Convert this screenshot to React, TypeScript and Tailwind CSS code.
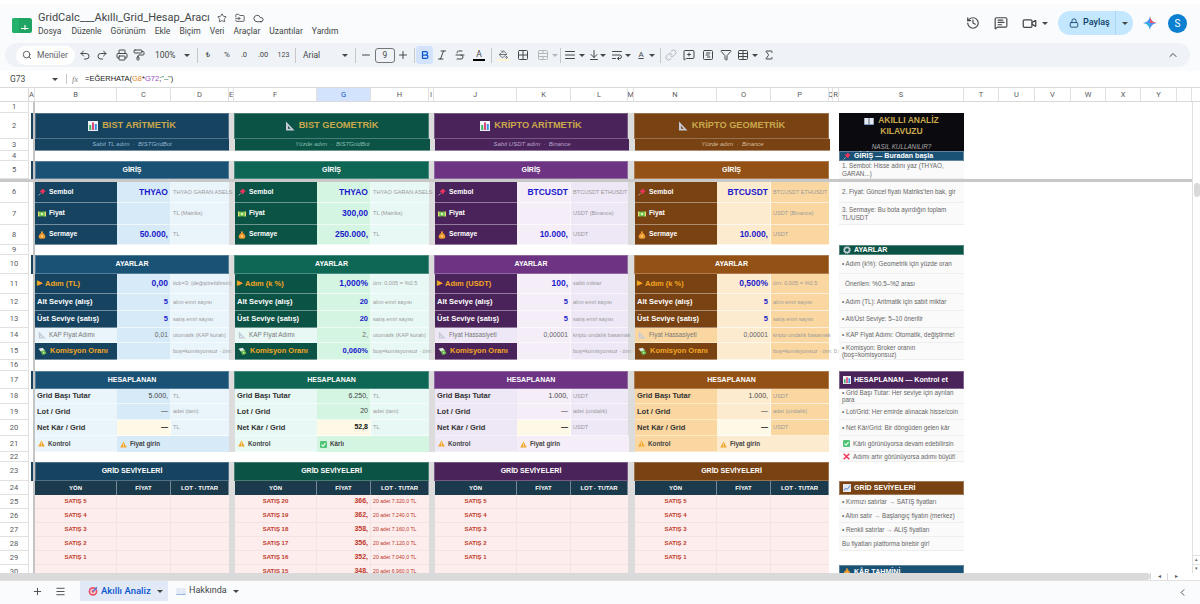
import { ReactNode } from "react";
import {
  Bold,
  ChevronLeft,
  ChevronUp,
  Cloud,
  Filter,
  FolderInput,
  Grid2x2,
  History,
  Italic,
  Link,
  Lock,
  Menu,
  MessageSquarePlus,
  MessageSquareText,
  Minus,
  PaintRoller,
  Plus,
  Printer,
  Redo2,
  Search,
  Sigma,
  SquareChartGantt,
  Star,
  Strikethrough,
  Table,
  TableCellsMerge,
  Undo2,
  Video,
  AlignJustify,
  ArrowDownToLine,
  WrapText,
  PaintBucket,
} from "lucide-react";

const SHEET_FONT = "font-['Liberation_Sans',Arial,sans-serif]";

const columns = [
  { l: "A", w: "w-[6px]" },
  { l: "B", w: "w-[82px]" },
  { l: "C", w: "w-[54px]" },
  { l: "D", w: "w-[58px]" },
  { l: "E", w: "w-[5px]" },
  { l: "F", w: "w-[83px]" },
  { l: "G", w: "w-[54px]" },
  { l: "H", w: "w-[58px]" },
  { l: "I", w: "w-[5px]" },
  { l: "J", w: "w-[83px]" },
  { l: "K", w: "w-[54px]" },
  { l: "L", w: "w-[57px]" },
  { l: "M", w: "w-[6px]" },
  { l: "N", w: "w-[83px]" },
  { l: "O", w: "w-[54px]" },
  { l: "P", w: "w-[58px]" },
  { l: "Q", w: "w-[4px]" },
  { l: "R", w: "w-[6px]" },
  { l: "S", w: "w-[125px]" },
  { l: "T", w: "w-[35px]" },
  { l: "U", w: "w-[36px]" },
  { l: "V", w: "w-[36px]" },
  { l: "W", w: "w-[35px]" },
  { l: "X", w: "w-[35px]" },
  { l: "Y", w: "w-[36px]" },
  { l: "", w: "w-[15px]" },
];

type Panel = {
  id: string;
  outer: string;
  inset: string;
  gutBg: string;
  headW: string;
  noteW: string;
  titleBg: string;
  headBg: string;
  labelBg: string;
  inputBg: string;
  noteBg: string;
  softBg: string;
  title: string;
  sub: string;
  subColor: string;
  sym: string;
  symNote: string;
  price: string;
  priceNote: string;
  capital: string;
  capNote: string;
  stepLabel: string;
  step: string;
  stepNote: string;
  lower: string;
  upper: string;
  tickLabel: string;
  tick: string;
  tickNote: string;
  comm: string;
  commNote: string;
  perGrid: string;
  unit: string;
  lot: string;
  lotNote: string;
  net: string;
  good: boolean;
  levels: string[][];
  geo: boolean;
};

const emptyLevels = [5, 4, 3, 2, 1, 0].map((n) => [n ? `SATIŞ ${n}` : "", "", ""]);

const panels: Panel[] = [
  {
    id: "bist-a",
    outer: "w-[199px]",
    inset: "",
    gutBg: "bg-[#dcdcdc]",
    headW: "w-[194px]",
    noteW: "w-[58px]",
    titleBg: "bg-[#154360]",
    headBg: "bg-[#1a5276]",
    labelBg: "bg-[#154360]",
    inputBg: "bg-[#d6eaf8]",
    noteBg: "bg-[#eaf4fb]",
    softBg: "bg-[#eaf4fb]",
    title: "BIST ARİTMETİK",
    sub: "Sabit TL adım  ·  BISTGridBot",
    subColor: "text-[#8fb4cf]",
    sym: "THYAO",
    symNote: "THYAO GARAN ASELS",
    price: "",
    priceNote: "TL (Matriks)",
    capital: "50.000,",
    capNote: "TL",
    stepLabel: "Adım (TL)",
    step: "0,00",
    stepNote: "tick=3: (değiştirebilirsin)",
    lower: "5",
    upper: "5",
    tickLabel: "KAP Fiyat Adımı",
    tick: "0,01",
    tickNote: "otomatik (KAP kuralı)",
    comm: "",
    commNote: "boş=komisyonsuz · örn: 0,06",
    perGrid: "5.000,",
    unit: "TL",
    lot: "—",
    lotNote: "adet (tam)",
    net: "—",
    good: false,
    levels: emptyLevels,
    geo: false,
  },
  {
    id: "bist-g",
    outer: "w-[200px]",
    inset: "pl-px",
    gutBg: "bg-[#dcdcdc]",
    headW: "w-[195px]",
    noteW: "w-[58px]",
    titleBg: "bg-[#0b5345]",
    headBg: "bg-[#0e6655]",
    labelBg: "bg-[#0b5345]",
    inputBg: "bg-[#d5f5e3]",
    noteBg: "bg-[#e8f8f5]",
    softBg: "bg-[#e8f8f5]",
    title: "BIST GEOMETRİK",
    sub: "Yüzde adım  ·  BISTGridBot",
    subColor: "text-[#82bdb0]",
    sym: "THYAO",
    symNote: "THYAO GARAN ASELS",
    price: "300,00",
    priceNote: "TL (Matriks)",
    capital: "250.000,",
    capNote: "TL",
    stepLabel: "Adım (k %)",
    step: "1,000%",
    stepNote: "örn: 0.005 = %0.5",
    lower: "20",
    upper: "20",
    tickLabel: "KAP Fiyat Adımı",
    tick: "2,",
    tickNote: "otomatik (KAP kuralı)",
    comm: "0,060%",
    commNote: "boş=komisyonsuz · örn: 0,06",
    perGrid: "6.250,",
    unit: "TL",
    lot: "20",
    lotNote: "adet (tam)",
    net: "52,8",
    good: true,
    levels: [
      ["SATIŞ 20", "366,", "20 adet 7.320,0 TL"],
      ["SATIŞ 19", "362,", "20 adet 7.240,0 TL"],
      ["SATIŞ 18", "358,", "20 adet 7.160,0 TL"],
      ["SATIŞ 17", "356,", "20 adet 7.120,0 TL"],
      ["SATIŞ 16", "352,", "20 adet 7.040,0 TL"],
      ["SATIŞ 15", "348,", "20 adet 6.960,0 TL"],
    ],
    geo: true,
  },
  {
    id: "kripto-a",
    outer: "w-[200px]",
    inset: "pl-px",
    gutBg: "bg-[#dcdcdc]",
    headW: "w-[194px]",
    noteW: "w-[57px]",
    titleBg: "bg-[#4a235a]",
    headBg: "bg-[#6c3483]",
    labelBg: "bg-[#4a235a]",
    inputBg: "bg-[#f5eef8]",
    noteBg: "bg-[#ede7f6]",
    softBg: "bg-[#ede7f6]",
    title: "KRİPTO ARİTMETİK",
    sub: "Sabit USDT adım  ·  Binance",
    subColor: "text-[#b9a3c9]",
    sym: "BTCUSDT",
    symNote: "BTCUSDT ETHUSDT",
    price: "",
    priceNote: "USDT (Binance)",
    capital: "10.000,",
    capNote: "USDT",
    stepLabel: "Adım (USDT)",
    step: "100,",
    stepNote: "sabit miktar",
    lower: "5",
    upper: "5",
    tickLabel: "Fiyat Hassasiyeti",
    tick: "0,00001",
    tickNote: "kripto ondalık basamak",
    comm: "",
    commNote: "boş=komisyonsuz · örn: 0,06",
    perGrid: "1.000,",
    unit: "USDT",
    lot: "—",
    lotNote: "adet (ondalık)",
    net: "—",
    good: false,
    levels: emptyLevels,
    geo: false,
  },
  {
    id: "kripto-g",
    outer: "w-[205px]",
    inset: "border-l border-[#dcdcdc]",
    gutBg: "bg-white",
    headW: "w-[195px]",
    noteW: "w-[58px]",
    titleBg: "bg-[#784212]",
    headBg: "bg-[#935116]",
    labelBg: "bg-[#784212]",
    inputBg: "bg-[#fdebd0]",
    noteBg: "bg-[#fad7a0]",
    softBg: "bg-[#fad7a0]",
    title: "KRİPTO GEOMETRİK",
    sub: "Yüzde adım  ·  Binance",
    subColor: "text-[#d8bb98]",
    sym: "BTCUSDT",
    symNote: "BTCUSDT ETHUSDT",
    price: "",
    priceNote: "USDT (Binance)",
    capital: "10.000,",
    capNote: "USDT",
    stepLabel: "Adım (k %)",
    step: "0,500%",
    stepNote: "örn: 0.005 = %0.5",
    lower: "5",
    upper: "5",
    tickLabel: "Fiyat Hassasiyeti",
    tick: "0,00001",
    tickNote: "kripto ondalık basamak",
    comm: "",
    commNote: "boş=komisyonsuz · örn: 0,06",
    perGrid: "1.000,",
    unit: "USDT",
    lot: "—",
    lotNote: "adet (ondalık)",
    net: "—",
    good: false,
    levels: emptyLevels,
    geo: true,
  },
];

// emoji are not installed here, so the sheet's emoji are small drawings
function ChartEmoji({ s = 10 }: { s?: number }) {
  return (
    <svg width={s} height={s} viewBox="0 0 10 10" className="shrink-0">
      <rect width="10" height="10" fill="#eef1f5" />
      <rect x="1.2" y="4" width="2" height="5" fill="#3db36b" />
      <rect x="4" y="1.5" width="2" height="7.5" fill="#e0457b" />
      <rect x="6.8" y="3" width="2" height="6" fill="#3d8fe0" />
    </svg>
  );
}

function RulerEmoji({ s = 10, c = "#c6c9d6" }: { s?: number; c?: string }) {
  return (
    <svg width={s} height={s} viewBox="0 0 10 10" className="shrink-0">
      <path d="M1 0.5 L9.5 9.5 H1 Z M3 5 V7.8 H5.7 Z" fill={c} fillRule="evenodd" />
    </svg>
  );
}

function PinEmoji({ s = 8 }: { s?: number }) {
  return (
    <svg width={s} height={s} viewBox="0 0 10 10" className="shrink-0">
      <path d="M6 0.5 L9.5 4 L8.3 4.6 L6.8 6.6 L6.6 8.4 L1.8 3.4 L3.6 3.2 L5.4 1.7 Z" fill="#e8345f" />
      <path d="M3.4 6.6 L0.6 9.4" stroke="#b9b9c4" strokeWidth="1" />
    </svg>
  );
}

function CashEmoji({ s = 8 }: { s?: number }) {
  return (
    <svg width={s} height={s} viewBox="0 0 10 10" className="shrink-0">
      <rect y="2" width="10" height="6" fill="#6fc24a" />
      <circle cx="5" cy="5" r="1.6" fill="#d9f2c5" />
      <rect y="2" width="1.5" height="6" fill="#e9df72" />
      <rect x="8.5" y="2" width="1.5" height="6" fill="#e9df72" />
    </svg>
  );
}

function BagEmoji({ s = 8 }: { s?: number }) {
  return (
    <svg width={s} height={s} viewBox="0 0 10 10" className="shrink-0">
      <path d="M3.4 0.6 H6.6 L5.8 2.6 C8 3.6 9.2 5.6 9.2 7.4 C9.2 9 8 9.6 5 9.6 C2 9.6 0.8 9 0.8 7.4 C0.8 5.6 2 3.6 4.2 2.6 Z" fill="#ef9a2e" />
      <circle cx="5" cy="6.6" r="1.3" fill="#ffd58a" />
    </svg>
  );
}

function FlyingMoney({ s = 9 }: { s?: number }) {
  return (
    <svg width={s} height={s} viewBox="0 0 10 10" className="shrink-0">
      <path d="M0.5 2 L5 0.8 L8.2 4.2 L3.6 5.6 Z" fill="#dfe7e2" />
      <path d="M3 5 L7.2 3.4 L9.6 7.2 L5.2 9.2 Z" fill="#63b845" />
      <circle cx="6.3" cy="6.3" r="0.9" fill="#cdeeb8" />
    </svg>
  );
}

function WarnEmoji({ s = 7 }: { s?: number }) {
  return (
    <svg width={s} height={s} viewBox="0 0 10 10" className="shrink-0">
      <path d="M5 0.6 L9.8 9.4 H0.2 Z" fill="#f4a52c" />
      <rect x="4.5" y="3.6" width="1" height="3.2" fill="#fff3d6" />
      <rect x="4.5" y="7.4" width="1" height="1" fill="#fff3d6" />
    </svg>
  );
}

function CheckEmoji({ s = 7 }: { s?: number }) {
  return (
    <svg width={s} height={s} viewBox="0 0 10 10" className="shrink-0">
      <rect width="10" height="10" rx="1.4" fill="#52c47a" />
      <path d="M2.2 5.2 L4.3 7.3 L7.9 3" fill="none" stroke="#eafff0" strokeWidth="1.5" />
    </svg>
  );
}

function CrossEmoji({ s = 7 }: { s?: number }) {
  return (
    <svg width={s} height={s} viewBox="0 0 10 10" className="shrink-0">
      <path d="M1 1 L9 9 M9 1 L1 9" stroke="#ee3a5c" strokeWidth="2.2" />
    </svg>
  );
}

function BookEmoji({ s = 10 }: { s?: number }) {
  return (
    <svg width={s} height={s} viewBox="0 0 10 10" className="shrink-0">
      <path d="M0.3 2 H4.7 V8.6 H0.3 Z M5.3 2 H9.7 V8.6 H5.3 Z" fill="#e2e9f4" />
      <path d="M0.3 8.2 H9.7 V9 H0.3 Z" fill="#7fa8d8" />
    </svg>
  );
}

function GearEmoji({ s = 8 }: { s?: number }) {
  return (
    <svg width={s} height={s} viewBox="0 0 10 10" className="shrink-0">
      <circle cx="5" cy="5" r="3.2" fill="none" stroke="#c3ccd2" strokeWidth="2" />
      <circle cx="5" cy="5" r="4.5" fill="none" stroke="#c3ccd2" strokeWidth="1" strokeDasharray="1.4 1.4" />
    </svg>
  );
}

function TrendEmoji({ s = 8 }: { s?: number }) {
  return (
    <svg width={s} height={s} viewBox="0 0 10 10" className="shrink-0">
      <rect width="10" height="10" fill="#e4e8ef" />
      <path d="M1 8 L3.5 5.5 L5.5 6.5 L9 2" fill="none" stroke="#6e8fd0" strokeWidth="1.3" />
    </svg>
  );
}

function TargetEmoji({ s = 10 }: { s?: number }) {
  return (
    <svg width={s} height={s} viewBox="0 0 10 10" className="shrink-0">
      <circle cx="5" cy="5.4" r="4.4" fill="#e8536a" />
      <circle cx="5" cy="5.4" r="2.7" fill="#f7d5da" />
      <circle cx="5" cy="5.4" r="1.3" fill="#e8536a" />
      <path d="M5 5.4 L9 1.2" stroke="#3b7be0" strokeWidth="1.3" />
    </svg>
  );
}

function GeminiStar() {
  return (
    <svg width="14" height="14" viewBox="0 0 14 14">
      <path d="M7 0 C7.4 4 10 6.6 14 7 C10 7.4 7.4 10 7 14 C6.6 10 4 7.4 0 7 C4 6.6 6.6 4 7 0 Z" fill="#4c8df6" />
      <path d="M7 0 C7.4 4 10 6.6 14 7 L7 7 Z" fill="#ef5a6f" />
      <path d="M0 7 C4 7.4 6.6 10 7 14 L7 7 Z" fill="#34b5d8" />
    </svg>
  );
}

function SheetsLogo() {
  return (
    <svg width="20" height="15" viewBox="0 0 20 15">
      <rect width="20" height="15" rx="2.5" fill="#1fa463" />
      <rect x="0" y="0" width="7" height="15" rx="2" fill="#23b26c" />
      <path d="M9 10.5 H16.5 M13 7 V12" stroke="#fff" strokeWidth="1.2" />
    </svg>
  );
}

function Caret({ cls = "" }: { cls?: string }) {
  return <span className={`w-0 h-0 shrink-0 border-l-[3px] border-r-[3px] border-t-[3px] border-l-transparent border-r-transparent border-t-[#444746] ${cls}`} />;
}

function Sep({ cls }: { cls: string }) {
  return <span className={`w-px h-[15px] bg-[#c7c7c7] shrink-0 ${cls}`} />;
}

function TopBar() {
  return (
    <div className="h-[39px] shrink-0 flex items-start font-['Roboto',sans-serif]">
      <div className="ml-[12px] mt-[14px]">
        <SheetsLogo />
      </div>
      <div className="ml-[6px] mt-[7px] flex flex-col">
        <div className="flex items-center h-[14px]">
          <span className="text-[11px] text-[#444746] w-[178px] whitespace-nowrap">GridCalc___Akıllı_Grid_Hesap_Aracı</span>
          <Star size={10} className="ml-[1px] text-[#444746]" />
          <FolderInput size={10} className="ml-[8px] text-[#444746]" />
          <Cloud size={11} className="ml-[8px] text-[#444746]" />
        </div>
        <div className="flex text-[8.5px] text-[#444746] mt-[0px] leading-[13px]">
          <span>Dosya</span>
          <span className="ml-[10px]">Düzenle</span>
          <span className="ml-[9px]">Görünüm</span>
          <span className="ml-[9px]">Ekle</span>
          <span className="ml-[9px]">Biçim</span>
          <span className="ml-[9px]">Veri</span>
          <span className="ml-[9px]">Araçlar</span>
          <span className="ml-[9px]">Uzantılar</span>
          <span className="ml-[9px]">Yardım</span>
        </div>
      </div>
      <div className="ml-auto flex items-center h-[24px] mt-[7px] mr-[13px]">
        <History size={14} className="text-[#444746]" />
        <MessageSquareText size={14} className="ml-[14px] text-[#444746]" />
        <Video size={15} className="ml-[14px] text-[#444746]" />
        <Caret cls="ml-[5px]" />
        <div className="ml-[10px] w-[75px] h-[24px] rounded-full bg-[#c2e7ff] flex items-center text-[#0b3d66]">
          <Lock size={10} className="ml-[11px]" />
          <span className="ml-[4px] text-[9px] font-medium w-[27px]">Paylaş</span>
          <span className="ml-[5px] w-px h-full bg-[#a9d6f2]" />
          <Caret cls="ml-[6px] border-t-[#0b3d66]" />
        </div>
        <div className="ml-[10px]">
          <GeminiStar />
        </div>
        <div className="ml-[11px] w-[19px] h-[19px] rounded-full bg-[#0b7fd0] text-white text-[10px] flex items-center justify-center">S</div>
      </div>
    </div>
  );
}

function Toolbar() {
  const ic = "shrink-0 text-[#444746]";
  return (
    <div className="h-[24px] shrink-0 mx-[5px] w-[1185px] rounded-full bg-[#eff3f8] flex items-center font-['Roboto',sans-serif] text-[#444746]">
      <div className="ml-[11px] w-[59px] h-[19px] rounded-full bg-white flex items-center shrink-0">
        <Search size={10} className="ml-[6px]" />
        <span className="ml-[5px] text-[8.5px] text-[#5f6368]">Menüler</span>
      </div>
      <Undo2 size={12} className={`ml-[4px] ${ic}`} />
      <Redo2 size={12} className={`ml-[5px] ${ic}`} />
      <Printer size={12} className={`ml-[8px] ${ic}`} />
      <PaintRoller size={12} className={`ml-[5px] ${ic}`} />
      <span className="ml-[10px] w-[21px] text-[8.5px]">100%</span>
      <Caret cls="ml-[8px]" />
      <Sep cls="ml-[7px]" />
      <span className="ml-[6px] w-[8px] text-[8px] text-center">₺</span>
      <span className="ml-[10px] w-[10px] text-[8px] text-center">%</span>
      <span className="ml-[6px] w-[12px] text-[7.5px] text-center">.0</span>
      <span className="ml-[6px] w-[14px] text-[7.5px] text-center">.00</span>
      <span className="ml-[7px] w-[13px] text-[7px] text-center">123</span>
      <Sep cls="ml-[5px]" />
      <span className="ml-[7px] w-[22px] text-[8.5px]">Arial</span>
      <Caret cls="ml-[17px]" />
      <Sep cls="ml-[7px]" />
      <Minus size={12} className={`ml-[4px] ${ic}`} />
      <span className="ml-[3px] w-[20px] h-[15px] rounded-[3px] border border-[#747775] flex items-center justify-center text-[8.5px] shrink-0">9</span>
      <Plus size={12} className={`ml-[2px] ${ic}`} />
      <Sep cls="ml-[5px]" />
      <span className="ml-[1px] w-[17px] h-[18px] rounded-[3px] bg-[#d3e3fd] flex items-center justify-center shrink-0">
        <Bold size={10} strokeWidth={3} className="text-[#0b57d0]" />
      </span>
      <Italic size={12} className={`ml-[3px] ${ic}`} />
      <Strikethrough size={12} className={`ml-[6px] ${ic}`} />
      <span className="ml-[7px] w-[12px] flex flex-col items-center shrink-0">
        <span className="text-[8.5px] leading-[9px]">A</span>
        <span className="w-[12px] h-[2px] bg-black" />
      </span>
      <Sep cls="ml-[6px]" />
      <span className="ml-[5px] w-[12px] flex flex-col items-center shrink-0">
        <PaintBucket size={9} />
        <span className="w-[12px] h-[2px] bg-[#fdf3cf]" />
      </span>
      <Grid2x2 size={12} className={`ml-[8px] ${ic}`} />
      <TableCellsMerge size={12} className="ml-[8px] shrink-0 text-[#b4b6b8]" />
      <Caret cls="ml-[3px] border-t-[#b4b6b8]" />
      <Sep cls="ml-[2px]" />
      <AlignJustify size={12} className={`ml-[3px] ${ic}`} />
      <Caret cls="ml-[3px]" />
      <ArrowDownToLine size={12} className={`ml-[3px] ${ic}`} />
      <Caret />
      <WrapText size={12} className={`ml-[5px] ${ic}`} />
      <Caret cls="ml-[2px]" />
      <span className="ml-[4px] w-[12px] flex flex-col items-center shrink-0">
        <span className="text-[8px] leading-[8px] underline">A</span>
      </span>
      <Caret cls="ml-[2px]" />
      <Sep cls="ml-[5px]" />
      <Link size={12} className="ml-[4px] shrink-0 text-[#b4b6b8]" />
      <MessageSquarePlus size={12} className={`ml-[6px] ${ic}`} />
      <SquareChartGantt size={12} className={`ml-[7px] ${ic}`} />
      <Filter size={12} className={`ml-[6px] ${ic}`} />
      <Table size={12} className={`ml-[5px] ${ic}`} />
      <Caret cls="ml-[3px]" />
      <Sigma size={12} className={`ml-[5px] ${ic}`} />
      <ChevronUp size={12} className={`ml-auto mr-[11px] ${ic}`} />
    </div>
  );
}

function FormulaBar() {
  return (
    <div className="h-[16px] shrink-0 mt-[4px] bg-white flex items-center text-[#444746] font-['Roboto',sans-serif]">
      <span className="ml-[10px] w-[41px] text-[8.5px]">G73</span>
      <Caret cls="ml-[1px]" />
      <span className="ml-[8px] w-px h-[10px] bg-[#c7c7c7]" />
      <span className="ml-[5px] w-[10px] text-[8.5px] italic text-[#80868b] font-['Liberation_Serif',serif]">fx</span>
      <span className="ml-[3px] text-[7.5px] whitespace-nowrap font-['Liberation_Sans',sans-serif] text-[#222]">
        =EĞERHATA(<span className="text-[#e8892b]">G8</span>*<span className="text-[#9c4fc4]">G72</span>;<span className="text-[#188038]">"–"</span>)
      </span>
    </div>
  );
}

function ColumnHeader() {
  return (
    <div className="h-[15px] shrink-0 bg-white flex border-y border-[#d9d9d9] font-['Roboto',sans-serif] text-[7.5px] text-[#575a5c]">
      <div className="w-[29px] shrink-0 border-r border-[#d9d9d9]" />
      {columns.map((c) => (
        <div
          key={c.w + c.l}
          className={`${c.w} shrink-0 flex items-center justify-center border-r border-[#e1e1e1] overflow-hidden ${c.l === "G" ? "bg-[#d3e3fd] text-[#0b57d0]" : ""}`}
        >
          {c.l}
        </div>
      ))}
    </div>
  );
}

type RowProps = {
  n: number;
  h: string;
  tab?: boolean;
  guide?: ReactNode;
  children?: (p: Panel) => ReactNode;
};

function Row({ n, h, tab, guide, children }: RowProps) {
  return (
    <div className={`flex shrink-0 ${h}`}>
      <div className="w-[29px] shrink-0 bg-white border-r border-b border-[#e1e1e1] flex items-center justify-center text-[7.5px] text-[#575a5c] font-['Roboto',sans-serif]">
        {n}
      </div>
      <div className="w-[6px] shrink-0 flex justify-end">
        {tab && <div className="w-[2px] bg-[#154360]" />}
        <div className="w-[2px] bg-[#c4c4c4]" />
      </div>
      {panels.map((p) => (
        <div key={p.id} className={`${p.outer} shrink-0 flex overflow-hidden`}>
          {children ? children(p) : null}
        </div>
      ))}
      <div className="w-[125px] shrink-0 relative">{guide}</div>
    </div>
  );
}

function Body({ p, children }: { p: Panel; children: ReactNode }) {
  return <div className={`flex w-full h-full ${p.gutBg} ${p.inset}`}>{children}</div>;
}

function MergedHead({ p, children, bg }: { p: Panel; children: ReactNode; bg: string }) {
  return (
    <div className={`flex w-full h-full ${p.gutBg}`}>
      <div className={`${p.headW} shrink-0 h-full ${bg} border border-white/25 text-white font-bold flex items-center justify-center whitespace-nowrap`}>
        {children}
      </div>
    </div>
  );
}

function Label({ p, children, dark, soft, gold, size = "text-[7.5px]" }: { p: Panel; children: ReactNode; dark?: boolean; soft?: boolean; gold?: boolean; size?: string }) {
  const color = gold ? "text-[#f4a623]" : dark ? "text-white" : soft ? "text-[#777]" : "text-[#333]";
  return (
    <div
      className={`w-[82px] shrink-0 h-full flex items-center gap-[3px] pl-[2px] whitespace-nowrap overflow-hidden border-b border-white/40 ${size} ${dark ? p.labelBg : p.softBg} ${color} ${soft ? "font-normal" : "font-bold"}`}
    >
      {children}
    </div>
  );
}

function Value({ p, v, size = "text-[7.5px]", tone = "text-[#1a1acc] font-bold", bg }: { p: Panel; v: string; size?: string; tone?: string; bg?: string }) {
  return (
    <div className={`w-[54px] shrink-0 h-full ${bg ?? p.inputBg} border-b border-r border-white/60 flex items-center justify-end pr-[2px] whitespace-nowrap ${size} ${tone}`}>
      {v}
    </div>
  );
}

function Note({ p, v }: { p: Panel; v: string }) {
  return (
    <div className={`${p.noteW} shrink-0 h-full ${p.noteBg} border-b border-white/60 flex items-center pl-[2px] whitespace-nowrap text-[#9a9a9a] text-[5.6px]`}>
      {v}
    </div>
  );
}

function GuideHead({ bg, icon, children, cls = "" }: { bg: string; icon: ReactNode; children: ReactNode; cls?: string }) {
  return (
    <div className={`absolute inset-x-0 top-0 h-full flex items-center gap-[3px] pl-[3px] text-white text-[7.1px] font-bold whitespace-nowrap border border-white/30 ${bg} ${cls}`}>
      {icon}
      {children}
    </div>
  );
}

function GuideLine({ children, wrap, inset }: { children: ReactNode; wrap?: boolean; inset?: boolean }) {
  return (
    <div className={`h-full bg-[#fafafa] border-b border-[#eeeeee] flex items-center text-[6.3px] leading-[7.5px] text-[#666] ${inset ? "pl-[6px]" : "pl-[3px]"} ${wrap ? "" : "whitespace-nowrap"}`}>
      <div>{children}</div>
    </div>
  );
}

function Sheet() {
  return (
    <div className={`h-[471px] shrink-0 flex ${SHEET_FONT}`}>
      <div className="w-[1192px] shrink-0 overflow-hidden flex flex-col bg-white">
        <Row n={1} h="h-[11px]" />
        <Row
          n={2}
          h="h-[26px]"
          tab
          guide={
            <div className="absolute inset-x-0 top-0 h-[38px] bg-[#0a0a0f] flex flex-col items-center text-center z-10">
              <div className="w-[110px] text-[8.5px] leading-[11px] font-bold text-[#c9a84c] mt-[2px] flex flex-wrap justify-center items-center gap-x-[4px]">
                <BookEmoji />
                <span>AKILLI ANALİZ</span>
                <span>KILAVUZU</span>
              </div>
              <div className="text-[6.3px] italic text-[#aaa] mt-[5px]">NASIL KULLANILIR?</div>
            </div>
          }
        >
          {(p) => (
            <MergedHead p={p} bg={p.titleBg}>
              <span className="flex items-center gap-[4px] text-[9.25px] text-[#c9a84c]">
                {p.geo ? <RulerEmoji /> : <ChartEmoji />}
                {p.title}
              </span>
            </MergedHead>
          )}
        </Row>
        <Row n={3} h="h-[12px]">
          {(p) => (
            <Body p={p}>
              <div className={`${p.headW} ${p.titleBg} shrink-0 border-b border-white/40 flex items-center justify-center text-[6px] italic whitespace-pre ${p.subColor}`}>
                {p.sub}
              </div>
            </Body>
          )}
        </Row>
        <Row
          n={4}
          h="h-[10px]"
          guide={
            <GuideHead bg="bg-[#1a5276]" icon={<PinEmoji />}>
              GİRİŞ — Buradan başla
            </GuideHead>
          }
        />
        <Row n={5} h="h-[18px]" tab guide={<GuideLine wrap>1. Sembol: Hisse adını yaz (THYAO, GARAN...)</GuideLine>}>
          {(p) => (
            <MergedHead p={p} bg={p.headBg}>
              <span className="text-[7px]">GİRİŞ</span>
            </MergedHead>
          )}
        </Row>
        <div className="h-[3px] w-[1192px] shrink-0 bg-[#c8c8c8]" />
        <Row n={6} h="h-[21px]" guide={<GuideLine>2. Fiyat: Güncel fiyatı Matriks'ten bak, gir</GuideLine>}>
          {(p) => (
            <Body p={p}>
              <Label p={p} dark size="text-[6.75px]">
                <span className="ml-[1px]"><PinEmoji /></span>
                Sembol
              </Label>
              <Value p={p} v={p.sym} size="text-[8.5px]" />
              <Note p={p} v={p.symNote} />
            </Body>
          )}
        </Row>
        <Row n={7} h="h-[22px]" guide={<GuideLine wrap>3. Sermaye: Bu bota ayırdığın toplam TL/USDT</GuideLine>}>
          {(p) => (
            <Body p={p}>
              <Label p={p} dark size="text-[6.75px]">
                <span className="ml-[1px]"><CashEmoji /></span>
                Fiyat
              </Label>
              <Value p={p} v={p.price} size="text-[8.5px]" />
              <Note p={p} v={p.priceNote} />
            </Body>
          )}
        </Row>
        <Row n={8} h="h-[20px]">
          {(p) => (
            <Body p={p}>
              <Label p={p} dark size="text-[6.75px]">
                <span className="ml-[1px]"><BagEmoji /></span>
                Sermaye
              </Label>
              <Value p={p} v={p.capital} size="text-[8.5px]" />
              <Note p={p} v={p.capNote} />
            </Body>
          )}
        </Row>
        <Row
          n={9}
          h="h-[10px]"
          guide={
            <GuideHead bg="bg-[#0b5345]" icon={<GearEmoji />} cls="h-[12px]">
              AYARLAR
            </GuideHead>
          }
        />
        <Row n={10} h="h-[19px]" tab guide={<GuideLine>• Adım (k%): Geometrik için yüzde oran</GuideLine>}>
          {(p) => (
            <MergedHead p={p} bg={p.headBg}>
              <span className="text-[7px]">AYARLAR</span>
            </MergedHead>
          )}
        </Row>
        <Row n={11} h="h-[20px]" guide={<GuideLine inset>Önerilen: %0.5–%2 arası</GuideLine>}>
          {(p) => (
            <Body p={p}>
              <Label p={p} dark gold>
                <span className="text-[7px]">▶</span>
                {p.stepLabel}
              </Label>
              <Value p={p} v={p.step} size="text-[8.5px]" />
              <Note p={p} v={p.stepNote} />
            </Body>
          )}
        </Row>
        <Row n={12} h="h-[17px]" guide={<GuideLine>• Adım (TL): Aritmatik için sabit miktar</GuideLine>}>
          {(p) => (
            <Body p={p}>
              <Label p={p} dark>Alt Seviye (alış)</Label>
              <Value p={p} v={p.lower} />
              <Note p={p} v="alım emri sayısı" />
            </Body>
          )}
        </Row>
        <Row n={13} h="h-[17px]" guide={<GuideLine>• Alt/Üst Seviye: 5–10 önerilir</GuideLine>}>
          {(p) => (
            <Body p={p}>
              <Label p={p} dark>Üst Seviye (satış)</Label>
              <Value p={p} v={p.upper} />
              <Note p={p} v="satış emri sayısı" />
            </Body>
          )}
        </Row>
        <Row n={14} h="h-[15px]" guide={<GuideLine>• KAP Fiyat Adımı: Otomatik, değiştirme!</GuideLine>}>
          {(p) => (
            <Body p={p}>
              <Label p={p} soft size="text-[6.3px]">
                <span className="ml-[1px]"><RulerEmoji s={8} /></span>
                {p.tickLabel}
              </Label>
              <Value p={p} v={p.tick} size="text-[6.75px]" tone="text-[#666]" />
              <Note p={p} v={p.tickNote} />
            </Body>
          )}
        </Row>
        <Row n={15} h="h-[17px]" guide={<GuideLine wrap>• Komisyon: Broker oranın (boş=komisyonsuz)</GuideLine>}>
          {(p) => (
            <Body p={p}>
              <Label p={p} dark gold>
                <span className="ml-[1px]"><FlyingMoney /></span>
                Komisyon Oranı
              </Label>
              <Value p={p} v={p.comm} />
              <Note p={p} v={p.commNote} />
            </Body>
          )}
        </Row>
        <Row n={16} h="h-[11px]" />
        <Row
          n={17}
          h="h-[18px]"
          tab
          guide={
            <GuideHead bg="bg-[#4a235a]" icon={<ChartEmoji s={8} />}>
              HESAPLANAN — Kontrol et
            </GuideHead>
          }
        >
          {(p) => (
            <MergedHead p={p} bg={p.headBg}>
              <span className="text-[7px]">HESAPLANAN</span>
            </MergedHead>
          )}
        </Row>
        <Row n={18} h="h-[15px]" guide={<GuideLine wrap>• Grid Başı Tutar: Her seviye için ayrılan para</GuideLine>}>
          {(p) => (
            <Body p={p}>
              <Label p={p}>Grid Başı Tutar</Label>
              <Value p={p} v={p.perGrid} size="text-[7px]" tone="text-[#444]" />
              <Note p={p} v={p.unit} />
            </Body>
          )}
        </Row>
        <Row n={19} h="h-[16px]" guide={<GuideLine>• Lot/Grid: Her emirde alınacak hisse/coin</GuideLine>}>
          {(p) => (
            <Body p={p}>
              <Label p={p}>Lot / Grid</Label>
              <Value p={p} v={p.lot} size="text-[7px]" tone="text-[#444]" />
              <Note p={p} v={p.lotNote} />
            </Body>
          )}
        </Row>
        <Row n={20} h="h-[16px]" guide={<GuideLine>• Net Kâr/Grid: Bir döngüden gelen kâr</GuideLine>}>
          {(p) => (
            <Body p={p}>
              <Label p={p}>Net Kâr / Grid</Label>
              <Value p={p} v={p.net} size="text-[7px]" bg="bg-[#fef9e7]" tone="text-[#111] font-bold" />
              <Note p={p} v={p.unit} />
            </Body>
          )}
        </Row>
        <Row
          n={21}
          h="h-[16px]"
          guide={
            <GuideLine>
              <span className="flex items-center gap-[3px] pl-[1px]">
                <CheckEmoji /> Kârlı görünüyorsa devam edebilirsin
              </span>
            </GuideLine>
          }
        >
          {(p) => (
            <Body p={p}>
              <Label p={p} soft size="text-[6.3px]">
                <span className="ml-[1px]"><WarnEmoji /></span>
                <span className="text-[#444] font-bold">Kontrol</span>
              </Label>
              <div className={`w-[112px] shrink-0 h-full ${p.inputBg} flex items-center gap-[3px] pl-[3px] text-[6.3px] font-bold text-[#444] whitespace-nowrap`}>
                {p.good ? <CheckEmoji /> : <WarnEmoji />}
                {p.good ? "Kârlı" : "Fiyat girin"}
              </div>
            </Body>
          )}
        </Row>
        <Row
          n={22}
          h="h-[10px]"
          guide={
            <GuideLine>
              <span className="flex items-center gap-[3px] pl-[1px]">
                <CrossEmoji /> Adımı artır görünüyorsa adımı büyüt!
              </span>
            </GuideLine>
          }
        />
        <Row n={23} h="h-[19px]" tab>
          {(p) => (
            <MergedHead p={p} bg={p.titleBg}>
              <span className="text-[7px]">GRİD SEVİYELERİ</span>
            </MergedHead>
          )}
        </Row>
        <Row
          n={24}
          h="h-[14px]"
          guide={
            <GuideHead bg="bg-[#784212]" icon={<TrendEmoji />}>
              GRİD SEVİYELERİ
            </GuideHead>
          }
        >
          {(p) => (
            <Body p={p}>
              <GridHead w="w-[82px]" v="YÖN" />
              <GridHead w="w-[54px]" v="FİYAT" />
              <GridHead w={p.noteW} v="LOT · TUTAR" />
            </Body>
          )}
        </Row>
        {[25, 26, 27, 28, 29, 30].map((n, i) => (
          <Row
            key={n}
            n={n}
            h="h-[14px]"
            guide={
              n === 30 ? (
                <GuideHead bg="bg-[#1a5276]" icon={<BagEmoji />} cls="h-[14px]">
                  KÂR TAHMİNİ
                </GuideHead>
              ) : n === 29 ? null : (
                <GuideLine>
                  {
                    [
                      "• Kırmızı satırlar → SATIŞ fiyatları",
                      "• Altın satır → Başlangıç fiyatın (merkez)",
                      "• Renkli satırlar → ALIŞ fiyatları",
                      "Bu fiyatları platforma birebir gir!",
                    ][i]
                  }
                </GuideLine>
              )
            }
          >
            {(p) => (
              <Body p={p}>
                <div className="w-[82px] shrink-0 bg-[#fdedec] border-b border-r border-[#f2e4e3] flex items-center justify-center text-[6px] font-bold text-[#c0392b]">
                  {p.levels[i][0]}
                </div>
                <div className="w-[54px] shrink-0 bg-[#fdedec] border-b border-r border-[#f2e4e3] flex items-center justify-end pr-[2px] text-[7px] font-bold text-[#c0392b]">
                  {p.levels[i][1]}
                </div>
                <div className={`${p.noteW} shrink-0 bg-[#fdedec] border-b border-[#f2e4e3] flex items-center pl-[2px] text-[5.2px] text-[#c0392b] whitespace-nowrap`}>
                  {p.levels[i][2]}
                </div>
              </Body>
            )}
          </Row>
        ))}
      </div>
      <div className="w-[8px] shrink-0 bg-white border-l border-[#e1e1e1] flex flex-col items-center">
        <div className="w-[6px] h-[14px] mt-[81px] rounded-full bg-[#d9d9d9]" />
        <div className="mt-auto w-full h-[9px] border-t border-[#e1e1e1] flex items-center justify-center text-[5px] text-[#666]">▴</div>
        <div className="w-full h-[9px] border-t border-[#e1e1e1] flex items-center justify-center text-[5px] text-[#666]">▾</div>
      </div>
    </div>
  );
}

function GridHead({ w, v }: { w: string; v: string }) {
  return (
    <div className={`${w} shrink-0 bg-[#1b3a4b] border-r border-white/40 flex items-center justify-center text-[6px] font-bold text-white whitespace-nowrap`}>
      {v}
    </div>
  );
}

function HScroll() {
  return (
    <div className="h-[8px] shrink-0 bg-white flex border-b border-[#e1e1e1]">
      <div className="w-[1150px] h-[7px] rounded-r-full bg-[#dadada] shrink-0" />
      <div className="ml-auto w-[34px] mr-[16px] flex text-[6px] text-[#555]">
        <span className="flex-1 flex items-center justify-center border-l border-[#d9d9d9]">◂</span>
        <span className="flex-1 flex items-center justify-center border-l border-[#d9d9d9]">▸</span>
      </div>
    </div>
  );
}

function TabBar() {
  return (
    <div className="flex-1 flex items-start font-['Roboto',sans-serif] text-[#444746]">
      <Plus size={11} className="ml-[32px] mt-[5px]" />
      <Menu size={11} className="ml-[12px] mt-[5px]" />
      <div className="ml-[14px] w-[88px] h-[20px] bg-[#e1e9f7] flex items-center text-[#0b57d0] text-[9.5px] font-medium">
        <span className="ml-[8px]"><TargetEmoji /></span>
        <span className="ml-[3px] whitespace-nowrap">Akıllı Analiz</span>
        <Caret cls="ml-[6px] border-t-[#0b57d0]" />
      </div>
      <div className="h-[20px] flex items-center text-[9px]">
        <span className="ml-[8px]"><BookEmoji /></span>
        <span className="ml-[3px]">Hakkında</span>
        <Caret cls="ml-[6px]" />
      </div>
      <ChevronLeft size={11} className="ml-auto mr-[12px] mt-[6px]" />
    </div>
  );
}

export default function App() {
  return (
    <div className="w-[1200px] h-[604px] overflow-hidden bg-[#f9fbfd] border-t-4 border-white flex flex-col">
      <TopBar />
      <Toolbar />
      <FormulaBar />
      <ColumnHeader />
      <Sheet />
      <HScroll />
      <TabBar />
    </div>
  );
}
